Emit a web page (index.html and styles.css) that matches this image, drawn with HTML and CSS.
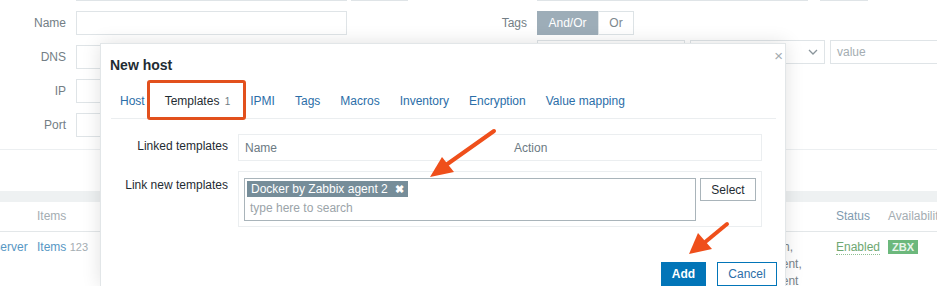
FILE: index.html
```html
<!DOCTYPE html>
<html lang="en">
<head>
    <meta charset="UTF-8">
    <meta name="viewport" content="width=device-width, initial-scale=1.0">
    <title>Hosts - New host</title>

    <link rel="stylesheet" href="styles.css">
</head>
<body>

    <div class="page">
        <div class="filter">
            <div class="filter-col left">
                <div class="row">
                    <span class="lbl"></span>
                    <span class="field wide"></span>
                    <span class="field narrow"></span>
                </div>
                <div class="row">
                    <label class="lbl">Name</label>
                    <span class="field wide"></span>
                </div>
                <div class="row">
                    <label class="lbl">DNS</label>
                    <span class="field wide"></span>
                </div>
                <div class="row">
                    <label class="lbl">IP</label>
                    <span class="field wide"></span>
                </div>
                <div class="row">
                    <label class="lbl">Port</label>
                    <span class="field wide"></span>
                </div>
            </div>
            <div class="filter-col right">
                <div class="row">
                    <span class="lbl"></span>
                    <span class="field wide"></span>
                    <span class="field small"></span>
                </div>
                <div class="row">
                    <label class="lbl">Tags</label>
                    <div class="toggle">
                        <span class="toggle-on">And/Or</span>
                        <span class="toggle-off">Or</span>
                    </div>
                </div>
                <div class="row tag-row">
                    <span class="lbl"></span>
                    <span class="field tag"></span>
                    <span class="field select">
                        <svg width="10" height="6" viewBox="0 0 10 6"><path d="M1 1l4 4 4-4" fill="none" stroke="#8a959b" stroke-width="1.3"/></svg>
                    </span>
                    <span class="field value">value</span>
                </div>
            </div>
        </div>
        <div class="filter-foot"></div>
        <div class="band"></div>

        <div class="hosts">
            <div class="tr head">
                <div class="td"></div>
                <div class="td">Items</div>
                <div class="td"></div>
                <div class="td sort">Status</div>
                <div class="td">Availability</div>
            </div>
            <div class="tr">
                <div class="td link">Zabbix server</div>
                <div class="td"><span class="link">Items</span> <sup class="count">123</sup></div>
                <div class="td tpl">
                    <div>Zabbix server health,</div>
                    <div>Linux by Zabbix agent,</div>
                    <div>Linux by Zabbix agent</div>
                </div>
                <div class="td"><span class="enabled">Enabled</span></div>
                <div class="td"><span class="zbx">ZBX</span></div>
            </div>
        </div>
    </div>

    <div class="dialog">
        <div class="dialog-head">
            <h4>New host</h4>
            <button type="button" class="close">&times;</button>
        </div>

        <ul class="tabs">
            <li>Host</li>
            <li class="active">Templates <span class="tab-count">1</span><span class="annot"></span></li>
            <li>IPMI</li>
            <li>Tags</li>
            <li>Macros</li>
            <li>Inventory</li>
            <li>Encryption</li>
            <li>Value mapping</li>
        </ul>

        <div class="form-grid">
            <label class="form-lbl linked-lbl">Linked templates</label>
            <div class="linked">
                <span>Name</span>
                <span>Action</span>
            </div>

            <label class="form-lbl">Link new templates</label>
            <div class="ms-box">
                <div class="multiselect">
                    <span class="chip">Docker by Zabbix agent 2 <b>&#10006;</b></span>
                    <span class="placeholder">type here to search</span>
                </div>
                <button type="button" class="btn-select">Select</button>
            </div>
        </div>

        <div class="dialog-foot">
            <button type="button" class="btn-add">Add</button>
            <button type="button" class="btn-cancel">Cancel</button>
        </div>
    </div>

    <svg class="arrows" width="937" height="286" viewBox="0 0 937 286">
        <line x1="494" y1="131" x2="446" y2="165" stroke="#ef4f1b" stroke-width="4" stroke-linecap="round"/>
        <polygon points="430,177 442,157 454,172" fill="#ef4f1b"/>
        <line x1="727" y1="224" x2="704" y2="243" stroke="#ef4f1b" stroke-width="4" stroke-linecap="round"/>
        <polygon points="689,254 698,233 712,249" fill="#ef4f1b"/>
    </svg>

</body>
</html>
```

FILE: styles.css
```css
body {
    font-family: "Liberation Sans", Arial, sans-serif;
    font-size: 12px;
    color: #1f2c33;
    background-color: #fff;
    margin: 0;
    width: 937px;
    height: 286px;
    overflow: hidden;
    position: relative;
}

/* background page */

.filter {
    display: flex;
    margin-top: -23px;
    height: 173px;
    border-bottom: 1px solid #eceff1;
    box-sizing: border-box;
}

.filter-col {
    display: flex;
    flex-direction: column;
    gap: 10px;
}

.filter-col.left {
    width: 500px;
    flex-shrink: 0;
}

.filter-col.right {
    flex-shrink: 0;
}

.row {
    display: flex;
    align-items: center;
    height: 24px;
}

.lbl {
    color: #737e85;
    text-align: right;
}

.left .lbl {
    width: 66px;
    margin-right: 10px;
}

.right .lbl {
    width: 27px;
    margin-right: 10px;
}

.field {
    display: flex;
    align-items: center;
    height: 24px;
    border: 1px solid #dfe4e7;
    box-sizing: border-box;
    background-color: #fff;
    flex-shrink: 0;
}

.field.wide {
    width: 271px;
}

.field.narrow {
    width: 57px;
    margin-left: 4px;
}

.field.small {
    width: 48px;
    margin-left: 12px;
}

.tag-row {
    margin-top: -5px;
}

.field.tag {
    width: 148px;
}

.field.select {
    width: 135px;
    margin-left: 5px;
    justify-content: flex-end;
    padding-right: 6px;
}

.field.value {
    width: 160px;
    margin-left: 5px;
    padding-left: 6px;
    color: #a4adb2;
}

.toggle {
    display: flex;
    height: 24px;
}

.toggle span {
    display: flex;
    align-items: center;
    justify-content: center;
    box-sizing: border-box;
}

.toggle-on {
    width: 61px;
    background-color: #9dadb8;
    color: #fff;
}

.toggle-off {
    width: 36px;
    border: 1px solid #dde3e6;
    color: #7d878d;
}

.filter-foot {
    height: 41px;
}

.band {
    height: 11px;
    background-color: #eef1f2;
}

.hosts {
    margin-left: -50px;
}

.tr {
    display: grid;
    grid-template-columns: 82px 644px 155px 52px 1fr;
}

.tr.head {
    height: 30px;
    align-items: center;
    border-bottom: 1px solid #e3e7e9;
    box-sizing: border-box;
    color: #a4adb2;
}

.tr.head .sort {
    color: #7f9bb0;
}

.td {
    padding: 0 5px;
    white-space: nowrap;
    line-height: 17px;
    overflow: hidden;
}

.tr:not(.head) .td {
    padding-top: 7px;
}

.link {
    color: #5797c4;
}

.count {
    color: #a4adb2;
    font-size: 11px;
    vertical-align: baseline;
}

.tpl {
    color: #7a8489;
}

.enabled {
    color: #6ea872;
    border-bottom: 1px dotted #8fbf92;
}

.zbx {
    display: inline-block;
    background-color: #6cb87c;
    color: #e9f5ec;
    font-size: 11px;
    font-weight: bold;
    line-height: 14px;
    padding: 0 4px;
}

/* dialog */

.dialog {
    position: absolute;
    left: 100px;
    top: 43px;
    width: 686px;
    height: 243px;
    background-color: #fff;
    border: 1px solid #e2e6e8;
    border-bottom: none;
    box-sizing: border-box;
    box-shadow: 0 0 18px rgba(0, 0, 0, 0.12);
}

.dialog-head {
    display: flex;
    justify-content: space-between;
    align-items: flex-start;
    padding: 13px 0 0 9px;
}

.dialog-head h4 {
    margin: 0;
    font-size: 14px;
    line-height: 16px;
    font-weight: bold;
}

.close {
    border: none;
    background: none;
    color: #a2abb0;
    font-size: 15px;
    line-height: 14px;
    padding: 0;
    margin: -8px 2px 0 0;
    font-family: "Liberation Sans", Arial, sans-serif;
}

.tabs {
    display: flex;
    list-style: none;
    margin: 14px 9px 0 10px;
    padding: 0;
    border-bottom: 1px solid #ebeef0;
}

.tabs li {
    padding: 7px 10px 9px 10px;
    line-height: 14px;
    color: #2b6ea8;
    position: relative;
}

.tabs li:first-child {
    padding-left: 9px;
    padding-right: 10px;
}

.tabs li.active {
    color: #1f2c33;
}

.tab-count {
    font-size: 10px;
    color: #6f7c84;
    margin-left: 2px;
}

.annot {
    position: absolute;
    left: -8px;
    right: -6px;
    top: -7px;
    bottom: -2px;
    border: 3px solid #e2501d;
    border-radius: 3px;
}

.form-grid {
    display: grid;
    grid-template-columns: 118px 524px;
    column-gap: 10px;
    row-gap: 10px;
    padding: 15px 0 0 9px;
}

.form-lbl {
    text-align: right;
    padding-top: 7px;
    line-height: 14px;
}

.linked-lbl {
    padding-top: 5px;
}

.linked {
    display: grid;
    grid-template-columns: 269px 1fr;
    height: 27px;
    align-items: center;
    border: 1px solid #ebeef0;
    box-sizing: border-box;
    color: #6c7a83;
}

.linked span {
    padding-left: 6px;
}

.ms-box {
    display: flex;
    align-items: flex-start;
    gap: 4px;
    height: 56px;
    padding: 6px 5px;
    border: 1px solid #ebeef0;
    box-sizing: border-box;
}

.multiselect {
    width: 452px;
    height: 43px;
    border: 1px solid #a9b4ba;
    box-sizing: border-box;
    padding: 2px 2px;
}

.chip {
    display: inline-block;
    background-color: #768d99;
    color: #fff;
    line-height: 16px;
    padding: 0 4px 0 4px;
}

.chip b {
    font-size: 11px;
    margin-left: 4px;
}

.placeholder {
    display: block;
    color: #9ba4a9;
    padding: 4px 0 0 3px;
}

.btn-select {
    width: 56px;
    height: 23px;
    background-color: #fff;
    border: 1px solid #a9b4ba;
    color: #1f2c33;
    font-family: "Liberation Sans", Arial, sans-serif;
    font-size: 12px;
    padding: 0;
}

.dialog-foot {
    display: flex;
    justify-content: flex-end;
    gap: 11px;
    padding: 35px 8px 0 0;
}

.dialog-foot button {
    height: 24px;
    font-family: "Liberation Sans", Arial, sans-serif;
    font-size: 12px;
    padding: 0;
    border: 1px solid #0275b8;
}

.btn-add {
    width: 45px;
    background-color: #0275b8;
    color: #fff;
    font-weight: bold;
}

.btn-cancel {
    width: 60px;
    background-color: #fff;
    color: #2b6ea8;
}

.arrows {
    position: absolute;
    left: 0;
    top: 0;
    pointer-events: none;
}
```
